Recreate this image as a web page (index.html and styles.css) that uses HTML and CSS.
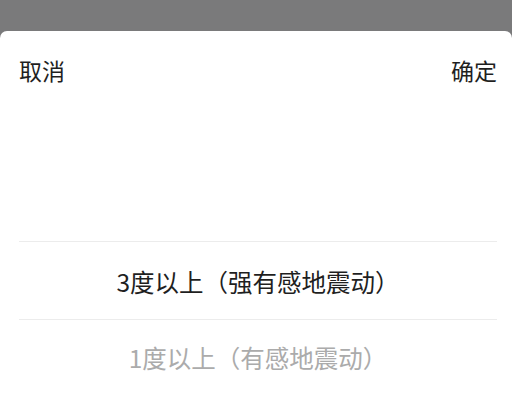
FILE: index.html
```html
<!DOCTYPE html>
<html lang="zh-CN">
<head>
<meta charset="UTF-8">
<meta name="viewport" content="width=device-width, initial-scale=1.0">
<title>地震提醒</title>
<link rel="stylesheet" href="styles.css">
</head>
<body>
<div class="sheet">
<div class="sheet-header">
<span class="header-btn">取消</span>
<span class="header-btn">确定</span>
</div>
<div class="picker">
<div class="picker-item selected">3度以上（强有感地震动）</div>
<div class="picker-item">1度以上（有感地震动）</div>
</div>
</div>
</body>
</html>
```

FILE: styles.css
```css
html, body {
height: 100%;
}
body {
margin: 0;
background: #7a7a7b;
font-family: "Noto Sans CJK SC", "Noto Sans", sans-serif;
color: #1f1f1f;
overflow: hidden;
}
.sheet {
margin-top: 31px;
background: #fff;
border-radius: 7px 7px 0 0;
height: calc(100% - 31px);
}
.sheet-header {
display: flex;
justify-content: space-between;
align-items: center;
height: 78px;
padding: 0 15px 0 19px;
}
.header-btn {
font-size: 23px;
line-height: 1;
}
.picker {
padding: 132px 15px 0 19px;
}
.picker-item {
box-sizing: border-box;
height: 74px;
display: flex;
align-items: center;
justify-content: center;
font-size: 24.5px;
color: #ababab;
}
.picker-item.selected {
height: 79px;
padding-top: 2px;
color: #1f1f1f;
border-top: 1px solid #ececec;
border-bottom: 1px solid #ececec;
}
```
